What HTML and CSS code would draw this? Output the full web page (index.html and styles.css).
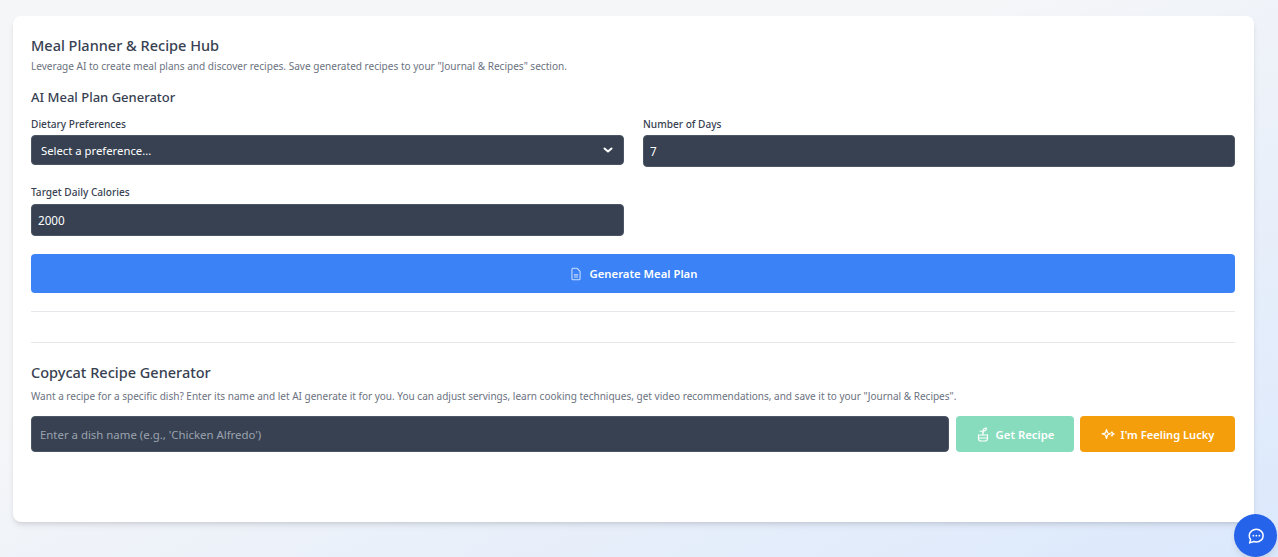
FILE: index.html
```html
<!DOCTYPE html>
<html lang="en">
<head>
<meta charset="utf-8">
<title>Meal Planner &amp; Recipe Hub</title>
<link rel="stylesheet" href="styles.css">
</head>
<body>
<main class="card">
  <h1 class="title">Meal Planner &amp; Recipe Hub</h1>
  <p class="desc">Leverage AI to create meal plans and discover recipes. Save generated recipes to your "Journal &amp; Recipes" section.</p>
  <h2 class="subtitle">AI Meal Plan Generator</h2>
  <div class="form-grid">
    <div class="field">
      <label class="label">Dietary Preferences</label>
      <div class="control select">
        <span>Select a preference...</span>
        <svg class="chev" width="12" height="12" viewBox="0 0 12 12" fill="none" stroke="#fff" stroke-width="2" stroke-linecap="round" stroke-linejoin="round"><path d="M2.500 4.500l3.500 3 3.500-3"/></svg>
      </div>
    </div>
    <div class="field">
      <label class="label">Number of Days</label>
      <div class="control input">7</div>
    </div>
    <div class="field wide-gap">
      <label class="label">Target Daily Calories</label>
      <div class="control input">2000</div>
    </div>
  </div>
  <button class="btn-primary">
    <svg width="14" height="14" viewBox="0 0 24 24" fill="none" stroke="#fff" stroke-opacity=".75" stroke-width="1.800" stroke-linecap="round" stroke-linejoin="round"><path d="M13.500 2H7a2 2 0 0 0-2 2v16a2 2 0 0 0 2 2h10a2 2 0 0 0 2-2V7.500z"/><path d="M9 13.500h6M9 17h6"/></svg>
    Generate Meal Plan
  </button>
  <hr class="rule first">
  <hr class="rule second">
  <h2 class="subtitle copy">Copycat Recipe Generator</h2>
  <p class="desc tight wide">Want a recipe for a specific dish? Enter its name and let AI generate it for you. You can adjust servings, learn cooking techniques, get video recommendations, and save it to your "Journal &amp; Recipes".</p>
  <div class="row">
    <div class="dish">Enter a dish name (e.g., 'Chicken Alfredo')</div>
    <button class="btn get">
      <svg width="14" height="15" viewBox="0 0 14 15" fill="none" stroke="#fff" stroke-width="1.200" stroke-linecap="round" stroke-linejoin="round"><path d="M7 8V4"/><path d="M7 4C7 2.300 8.300 1 10.500 1 10.500 2.800 9.200 4 7 4z"/><path d="M7 5.500C6.200 4.500 5.200 4 4 4"/><path d="M2.500 8h9"/><path d="M2.500 8v3.500A2.500 2.500 0 0 0 5 14h4a2.500 2.500 0 0 0 2.500-2.500V8"/><path d="M2.500 11h9"/></svg>
      Get Recipe
    </button>
    <button class="btn lucky">
      <svg width="14" height="12" viewBox="0 0 14 12" fill="none" stroke="#fff" stroke-width="1.200" stroke-linecap="round" stroke-linejoin="round"><path d="M5.500 1.500l1 3.300L9 5.800 6.500 7 5.500 10.500 4.500 7 1 5.800l3.500-1z"/><path d="M10 5l1-1 .8 1.500 1.400.5-1.400.5L11 8l-.8-1"/></svg>
      I'm Feeling Lucky
    </button>
  </div>
</main>
<button class="chat" aria-label="Chat">
  <svg width="18" height="18" viewBox="0 0 24 24" fill="none" stroke="#fff" stroke-width="2" stroke-linecap="round" stroke-linejoin="round"><path d="M12.500 3c5 0 9 3.700 9 8.500S17.500 20 12.500 20c-1.200 0-2.400-.2-3.500-.6l-5.500 1.800 1.300-4.400C3.700 15.300 3 13.500 3 11.500 3 6.700 7.500 3 12.500 3z"/><path d="M8.500 11.500h.01M12.500 11.500h.01M16.500 11.500h.01" stroke-width="2.400"/></svg>
</button>
</body>
</html>
```
FILE: styles.css
```css
* { box-sizing: border-box; }
html, body { height: 100%; }
body {
  margin: 0;
  height: 557px;
  overflow: hidden;
  padding: 16px 24px 0 13px;
  background: linear-gradient(to bottom right, #f5f6f8 0%, #f5f6f8 38%, #dbe8fc 100%);
  font-family: "Noto Sans", "Open Sans", sans-serif;
  color: #374151;
}
.card {
  height: 506px;
  background: #fff;
  border-radius: 8px;
  box-shadow: 0 4px 6px -1px rgba(0,0,0,.1), 0 2px 4px -2px rgba(0,0,0,.1);
  padding: 19px 19px 0 18px;
}
.title { margin: 0; font-size: 14.500px; line-height: 20px; font-weight: 500; color: #374151; }
.desc { margin: 4px 0 0; font-size: 10.050px; line-height: 14px; color: #6b7280; }
.desc.tight { margin-top: 7px; }
.desc.wide { font-size: 10.030px; }
.subtitle { margin: 15px 0 0; font-size: 13px; line-height: 18px; font-weight: 500; color: #374151; }
.subtitle.copy { margin-top: 19px; font-size: 14.500px; line-height: 20px; }
.form-grid { display: grid; grid-template-columns: 593px 592px; column-gap: 19px; row-gap: 18px; margin-top: 11px; }
.label { display: block; font-size: 10.100px; line-height: 14px; margin-bottom: 4px; color: #374151; font-weight: 500; }
.wide-gap .label { margin-bottom: 5px; }
.control {
  background: #374151;
  color: #fff;
  border: 1px solid #4b5563;
  border-radius: 4px;
  font-size: 11.700px;
  display: flex;
  align-items: center;
}
.select { height: 30px; padding: 0 9px 0 9px; justify-content: space-between; font-size: 11.300px; }
.input { height: 32px; padding: 0 6px; }
.input:first-child { padding: 0 6px; }
.btn-primary {
  display: flex;
  align-items: center;
  justify-content: center;
  gap: 7px;
  width: 100%;
  height: 39px;
  margin-top: 18px;
  border: 0;
  border-radius: 4px;
  background: #3b82f6;
  color: #fff;
  font: 600 11.300px "Noto Sans", sans-serif;
}
.rule { margin: 0; border: 0; border-top: 1px solid #e5e7eb; }
.rule.first { margin-top: 18px; }
.rule.second { margin-top: 30px; }
.row { display: flex; gap: 6px; margin-top: 13px; }
.dish {
  flex: 1;
  height: 36px;
  margin-right: 1px;
  display: flex;
  align-items: center;
  padding: 0 8px;
  background: #374151;
  border: 1px solid #4b5563;
  border-radius: 4px;
  color: #9ca3af;
  font-size: 11.400px;
}
.btn {
  display: flex;
  align-items: center;
  justify-content: center;
  gap: 6px;
  height: 36px;
  border: 0;
  border-radius: 4px;
  color: #fff;
  font: 600 11.300px "Noto Sans", sans-serif;
}
.get { width: 118px; background: #86dcbc; }
.lucky { width: 155px; background: #f59e0b; font-size: 11.150px; }
.chat {
  position: absolute;
  left: 1234px;
  top: 514px;
  width: 43px;
  height: 43px;
  border: 0;
  border-radius: 50%;
  background: #2563eb;
  display: flex;
  align-items: center;
  justify-content: center;
  box-shadow: 0 4px 6px -1px rgba(0,0,0,.1);
}
```
